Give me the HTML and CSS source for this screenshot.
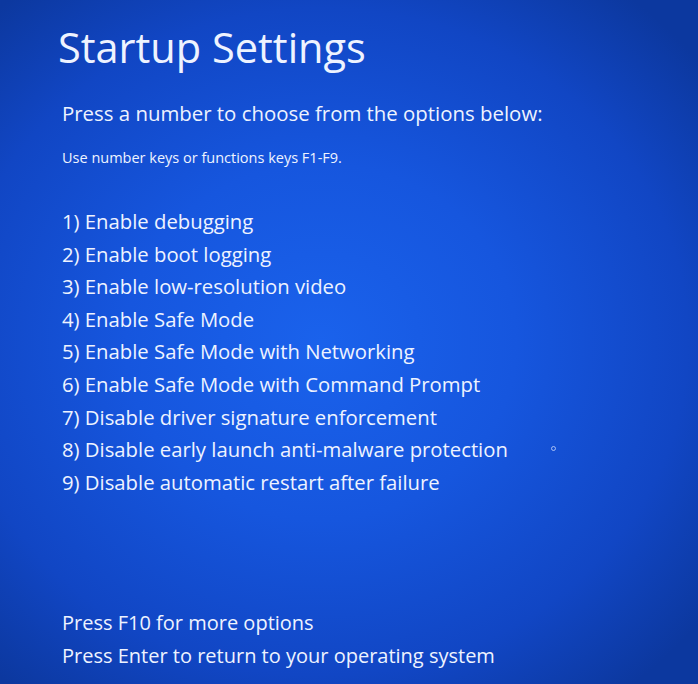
FILE: index.html
```html
<!DOCTYPE html>
<html>
<head>
<meta charset="utf-8">
<link rel="stylesheet" href="styles.css">
</head>
<body>
<div class="screen">
  <h1 class="title">Startup Settings</h1>
  <p class="prompt">Press a number to choose from the options below:</p>
  <p class="hint">Use number keys or functions keys F1-F9.</p>
  <ol class="options">
    <li>1) Enable debugging</li>
    <li>2) Enable boot logging</li>
    <li>3) Enable low-resolution video</li>
    <li>4) Enable Safe Mode</li>
    <li>5) Enable Safe Mode with Networking</li>
    <li>6) Enable Safe Mode with Command Prompt</li>
    <li>7) Disable driver signature enforcement</li>
    <li>8) Disable early launch anti-malware protection</li>
    <li>9) Disable automatic restart after failure</li>
  </ol>
  <div class="footer">
    <p class="line">Press F10 for more options</p>
    <p class="line">Press Enter to return to your operating system</p>
  </div>
  <span class="dot"></span>
</div>
</body>
</html>
```
FILE: styles.css
```css
html, body {
  margin: 0;
  padding: 0;
  height: 100%;
}
body {
  background: #0f3ea8;
}
.screen {
  position: relative;
  width: 698px;
  height: 684px;
  box-sizing: border-box;
  padding: 20px 0 0 62px;
  display: flex;
  flex-direction: column;
  color: #eef3ff;
  font-family: "Open Sans", "Noto Sans", sans-serif;
  background:
    radial-gradient(ellipse 70% 65% at 46% 50%, #1a62ec 0%, #1656de 40%, #1146c4 75%, #0c389f 100%);
  overflow: hidden;
}
.title {
  margin: 0 0 0 -4px;
  font-weight: 400;
  font-size: 41.5px;
  line-height: 54px;
}
.prompt {
  margin: 25px 0 0 0;
  font-size: 20.4px;
  line-height: 28px;
}
.hint {
  margin: 21px 0 0 0;
  font-size: 14.5px;
  line-height: 20px;
}
.options {
  list-style: none;
  margin: 37px 0 0 0;
  padding: 0;
  display: flex;
  flex-direction: column;
  font-size: 20.3px;
}
.options li {
  line-height: 32.6px;
}
.footer {
  margin-top: auto;
  padding-bottom: 12px;
  font-size: 20px;
}
.line {
  margin: 0;
  line-height: 33px;
}
.dot {
  position: absolute;
  left: 551px;
  top: 446px;
  width: 3px;
  height: 3px;
  border: 1px solid rgba(220, 230, 255, 0.7);
  border-radius: 50%;
}
```
